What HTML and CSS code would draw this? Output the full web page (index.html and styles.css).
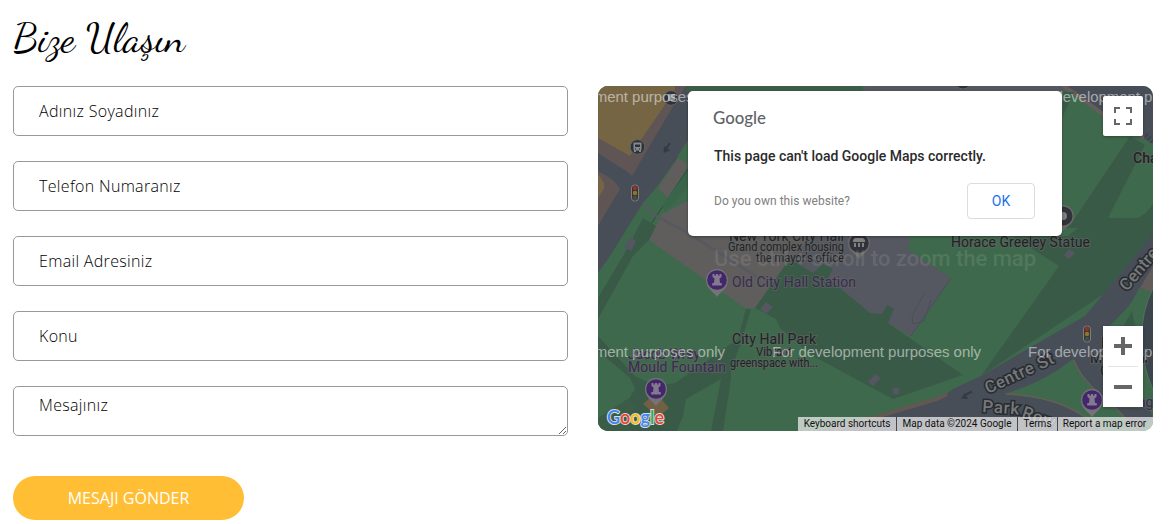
FILE: index.html
```html
<!DOCTYPE html>
<html lang="tr">
<head>
<meta charset="utf-8">
<title>Bize Ulaşın</title>
<link rel="stylesheet" href="styles.css">
</head>
<body>
<main class="contact">
  <h2 class="heading"><svg class="heading-art" width="190" height="56" viewBox="0 0 190 56"><text x="0" y="39.500" textLength="172" lengthAdjust="spacingAndGlyphs">Bize Ulaşın</text></svg></h2>
  <div class="columns">
    <form class="form">
      <input class="field" type="text" placeholder="Adınız Soyadınız">
      <input class="field" type="text" placeholder="Telefon Numaranız">
      <input class="field" type="email" placeholder="Email Adresiniz">
      <input class="field" type="text" placeholder="Konu">
      <textarea class="field message" placeholder="Mesajınız"></textarea>
      <button class="submit" type="button">MESAJI GÖNDER</button>
    </form>
    <section class="map">
      <svg class="canvas" width="555" height="345" viewBox="0 0 555 345">
        <defs>
          <g id="tower">
            <path d="M0 17C-3 12-11 9-11 0A11 11 0 0 1 11 0C11 9 3 12 0 17Z" fill="#77727a"/>
            <circle r="9.8" fill="#43276b"/>
            <path d="M-4.5-6h2v1.6h1.5V-6h2v1.6h1.5V-6H4.500v3L2.500-1.500 3 3H4.800v2.500H-4.800V3H-3l.5-4.500-2-1.500Z" fill="#85798f"/>
          </g>
          <g id="signal">
            <rect x="-3.5" y="-8" width="7" height="16" rx="3" fill="#3c3532" stroke="#827e77"/>
            <circle cy="-5" r="2.2" fill="#8c3434"/><circle r="2.2" fill="#8b762a"/><circle cy="5" r="2.2" fill="#3c504d"/>
          </g>
        </defs>
        <rect width="555" height="345" fill="#3f694c"/>
        <path d="M0 0H90L0 145Z" fill="#5e5554"/>
        <path d="M0 0H77V4L32 70 0 52Z" fill="#756545"/>
        <path d="M0 88 6 97V103L0 112Z" fill="#756545"/>
        <path d="M35 0 25 62M48 0 32 64M64 0 49 42M70 3 37 55" stroke="#786740" fill="none"/>
        <path d="M88 0H131L90 57 58 102 45 117 12 170 0 187V140L22 103Q17 93 0 85V67L20 80Q29 85 34 90L77 17Z" fill="#474e57"/>
        <path d="M90 57 60 102 70 112 90 80V115L64 128 51 154 147 222H157L190 177 230 150V90Z" fill="#605d5d"/>
        <path d="M90 54 79 71 90 78Z" fill="#3f694c"/>
        <path d="M90 83 53 138" stroke="#34483f" fill="none"/>
        <path d="M45 117C53 132 75 137 90 147L159 191" stroke="#56595f" stroke-width="2.5" fill="none"/>
        <path d="M64 119 67 126 80 113 90 100V85Z" fill="#39664a"/>
        <path d="M45 132 58 140 51 154 35 170 0 233V212L25 170Z" fill="#3a5a48"/>
        <path d="M32 151 38 155 33 165 26 161Z" fill="#555760"/>
        <path d="M215 150H312V157L309 163 353 192 313 250 290 237 272 227 190 175Z" fill="#565861"/>
        <path d="M188 178 197 176 215 187 225 178 235 183 230 192 272 227 284 228 289 219 296 223 290 237 365 289 295 313 215 270 182 242 178 233 157 222Z" fill="#3a5a48"/>
        <path d="M168 216 175 221 168 228 162 223ZM277 288 283 292 275 300 270 296Z" fill="#555760"/>
        <circle cx="298" cy="305" r="3.6" fill="#555760"/>
        <path d="M326 208 314 230 315 238 326 235 333 214M353 192 313 250" stroke="#4d4f59" fill="none"/>
        <path d="M88 0H265V6H88Z" fill="#3b5d48"/>
        <path d="M262 6 269 0H485V6Z" fill="#555760"/>
        <path d="M470 0 476 7 505 28 555 58V0Z" fill="#474e57"/>
        <path d="M465 0 476 7 505 28 546 52" stroke="#655d59" stroke-width="4" fill="none"/>
        <path d="M465 6H476L465 30ZM532 50 547 59 510 132H538Q546 131 555 118V175L383 290 461 180 414 150H470L480 142H465V135H475Z" fill="#3a5a48"/>
        <path d="M471 163 477 167 471 173 466 169Z" fill="#555760"/>
        <path d="M0 250 37 290 57 300 77 297 120 267 140 253 148 223H153L143 257 133 283V293L125 345H113L123 293 88 313 85 330 79 345H0V333L27 319 37 303 32 292 0 265Z" fill="#3a5a48"/>
        <path d="M0 345H32Q25 330 40 320L31 312 0 332Z" fill="#3b5d48"/>
        <path d="M45 318 58 307 71 322 60 331Z" fill="#716044"/>
        <path d="M555 148 537 170 487 230 445 254 383 290 355 303 339 315 220 345H540L555 330 505 247 555 195Z" fill="#474e57"/>
        <path d="M349 308 339 313 235 344" stroke="#625752" stroke-width="4" fill="none"/>
        <path d="M475 273Q482 294 511 315L540 345H502Q478 321 443 313L406 308Q445 297 475 273Z" fill="#3f694c"/>
        <path d="M408 308Q465 309 508 345M476 274Q484 296 511 315L540 345" stroke="#665c59" stroke-width="1.5" fill="none"/>
        <path d="M541 202Q530 227 506 246L534 271 555 317V206Z" fill="#3f694c"/>
        <path d="M542 202 555 180V206Z" fill="#625b5a"/>
        <path d="M534 225 517 254H540Z" fill="#3a5a48"/>
        <path d="M555 202Q532 250 555 304" fill="#3c444e" stroke="#507257"/>
        <path d="M72 57 67 64M366 309.500 374 305.500" stroke="#343b42" stroke-width="2" fill="none"/>
        <path d="M66 60 65.500 67 72 64.500ZM363 312.500 367 307 370 313Z" fill="#343b42"/>
        <path d="M548 49 555 56" stroke="#343b42" stroke-width="5" stroke-dasharray="1 3"/>
        <g fill="#29333d" stroke="#67625e"><circle cx="39.500" cy="61" r="7.3"/><circle cx="73" cy="12" r="7.3"/><circle cx="365" cy="-5" r="8"/></g>
        <g fill="#89898a"><rect x="35.500" y="56.500" width="8" height="8" rx="1"/><rect x="70" y="8" width="7" height="7" rx="1"/><path d="M36 64h2v2h-2zM41 64h2v2h-2z"/></g>
        <path d="M37 58.500h5v2.500h-5z" fill="#29333d"/><circle cx="37.500" cy="63" r=".7" fill="#29333d"/><circle cx="41.500" cy="63" r=".7" fill="#29333d"/>
        <use href="#signal" x="37" y="107"/><use href="#signal" x="489" y="248"/>
        <use href="#tower" x="119" y="194"/><use href="#tower" x="58" y="303"/><use href="#tower" x="494" y="314"/>
        <path d="M261 173C258 168 250 166 250 157A11 11 0 0 1 272 157C272 166 264 168 261 173ZM465 145C462 141 454 138 454 130A11 11 0 0 1 476 130C476 138 468 141 465 145Z" fill="#6a6968"/>
        <circle cx="261" cy="157" r="9.7" fill="#30343a"/><circle cx="465" cy="130" r="9.5" fill="#30343a"/><circle cx="465" cy="130" r="4" fill="#7c7c7c"/>
        <path d="M255 156v-2l2-2h8l2 2v2zM256 157h2v4h-2zM260 157h2v4h-2zM264 157h2v4h-2z" fill="#818181"/>
        <g class="label">
          <text x="131" y="155" textLength="115">New York City Hall</text>
          <g class="small"><text x="130" y="165" textLength="116" lengthAdjust="spacingAndGlyphs">Grand complex housing</text><text x="158" y="176" textLength="88" lengthAdjust="spacingAndGlyphs">the mayor's office</text></g>
          <text x="353" y="161" textLength="139">Horace Greeley Statue</text>
          <text x="134" y="258" textLength="84">City Hall Park</text>
          <g class="small"><text x="158" y="270" textLength="36" lengthAdjust="spacingAndGlyphs">Vibrant</text><text x="132" y="281" textLength="88" lengthAdjust="spacingAndGlyphs">greenspace with...</text></g>
          <g class="violet"><text x="134" y="201" textLength="124">Old City Hall Station</text><text x="30" y="273" textLength="72">Jacob Wrey</text><text x="30" y="286" textLength="98">Mould Fountain</text><text x="507" y="321">Printing</text></g>
          <text class="bold" x="535" y="77">Chambers St</text>
          <text x="503" y="262">M</text><text x="492" y="277" textLength="58">Memorial</text><text x="502" y="290">Grove</text>
        </g>
        <g class="street">
          <text transform="translate(390 308) rotate(-25)" textLength="74">Centre St</text>
          <text transform="translate(529 206) rotate(-50)">Centre St</text>
          <text transform="translate(384 326) rotate(4)" textLength="37">Park</text>
          <text transform="translate(423 331) rotate(19)" textLength="34">Row</text>
        </g>
        <text class="hint" x="116" y="180" textLength="322">Use ctrl + scroll to zoom the map</text>
        <g class="watermark">
          <text x="-82" y="15.500" textLength="209">For development purposes only</text><text x="174" y="15.500" textLength="209">For development purposes only</text><text x="430" y="15.500" textLength="209">For development purposes only</text>
          <text x="-82" y="271" textLength="209">For development purposes only</text><text x="174" y="271" textLength="209">For development purposes only</text><text x="430" y="271" textLength="209">For development purposes only</text>
        </g>
        <text class="brand" x="9" y="338" textLength="57" lengthAdjust="spacingAndGlyphs"><tspan fill="#4285f4">G</tspan><tspan fill="#ea4335">o</tspan><tspan fill="#fbbc05">o</tspan><tspan fill="#4285f4">g</tspan><tspan fill="#34a853">l</tspan><tspan fill="#ea4335">e</tspan></text>
      </svg>
      <div class="dialog">
        <svg class="dialog-logo" width="54" height="22" viewBox="0 0 54 22"><text x="0" y="16" textLength="53" lengthAdjust="spacingAndGlyphs">Google</text></svg>
        <p class="error">This page can't load Google Maps correctly.</p>
        <div class="dialog-row"><span class="owner">Do you own this website?</span><button class="ok" type="button">OK</button></div>
      </div>
      <button class="control fullscreen" type="button" aria-label="Tam ekran"><svg width="18" height="18" viewBox="0 0 18 18"><path d="M1 6V1H6M12 1H17V6M17 12V17H12M6 17H1V12" fill="none" stroke="#666" stroke-width="2"/></svg></button>
      <div class="control zoom">
        <svg width="18" height="40" viewBox="0 0 18 40"><path d="M9 11V29M0 20H18" stroke="#666" stroke-width="4"/></svg>
        <span class="divider"></span>
        <svg width="18" height="40" viewBox="0 0 18 40"><path d="M0 20H18" stroke="#666" stroke-width="4"/></svg>
      </div>
      <div class="legal"><span class="keys">Keyboard shortcuts</span><span class="data">Map data ©2024 Google</span><span class="terms">Terms</span><span class="report">Report a map error</span></div>
    </section>
  </div>
</main>
</body>
</html>
```
FILE: styles.css
```css
* { box-sizing: border-box; }
body { margin: 0; background: #fff; font-family: "Open Sans", sans-serif; overflow: hidden; }
.contact { width: 1174px; height: 524px; padding: 11px 21px 0 13px; }
.heading { margin: 0; height: 75px; }
.heading-art { display: block; overflow: visible; }
.heading-art text { font: 400 40px "Dancing Script", cursive; fill: #000; }
.columns { display: flex; gap: 30px; align-items: flex-start; }
.form { width: 555px; display: flex; flex-direction: column; align-items: flex-start; gap: 25px; }
.field { width: 555px; height: 50px; margin: 0; padding: 0 25px; border: 1px solid #999; border-radius: 5px; background: #fff; font: 300 16px/22px "Open Sans", sans-serif; letter-spacing: .33px; outline: 0; }
.field::placeholder { color: #000; opacity: 1; }
.message { display: block; padding-top: 7px; resize: vertical; overflow: hidden; }
.submit { width: 231px; height: 44px; margin-top: 15px; padding: 0; border: 0; border-radius: 22px; background: #ffbe33; color: #fff; font: 400 16px/44px "Open Sans", sans-serif; }
.map { position: relative; width: 555px; height: 345px; flex: none; overflow: hidden; border-radius: 10px; font-family: Roboto, sans-serif; }
.canvas { display: block; }
.label { font: 400 14px Roboto, sans-serif; fill: #202327; stroke: #626462; stroke-width: 2px; stroke-opacity: .65; paint-order: stroke; }
.small { font-size: 12px; }
.violet { fill: #392b51; }
.bold { font-weight: 500; }
.street { font: 500 17px Roboto, sans-serif; fill: #777878; stroke: #272c32; stroke-width: 3px; paint-order: stroke; }
.hint { font: 500 22px Roboto, sans-serif; fill: rgba(255,255,255,.11); }
.watermark { font: 400 15px "Liberation Sans", Arial, sans-serif; fill: rgba(255,255,255,.52); }
.brand { font: 600 20px Lato, sans-serif; stroke: #d8dedb; stroke-width: 2px; paint-order: stroke; }
.dialog { position: absolute; left: 90px; top: 5px; width: 374px; height: 145px; padding: 17px 27px 0 26px; border-radius: 5px; background: #fff; box-shadow: 0 1px 3px rgba(0,0,0,.35); }
.dialog-logo { display: block; margin-left: -1px; }
.dialog-logo text { font: 500 18px Lato, sans-serif; fill: #5f6368; }
.error { margin: 17px 0 0; color: #2a2a2a; font: 500 14px/18px Roboto, sans-serif; white-space: nowrap; }
.dialog-row { display: flex; align-items: center; justify-content: space-between; margin-top: 18px; }
.owner { color: #808080; font-size: 12px; letter-spacing: .04px; }
.ok { width: 68px; height: 36px; padding: 0; border: 1px solid #dadce0; border-radius: 4px; background: #fff; color: #1a73e8; font: 400 14px Roboto, sans-serif; }
.control { position: absolute; right: 10px; width: 40px; padding: 0; border: 0; border-radius: 2px; background: #fff; box-shadow: 0 1px 3px rgba(0,0,0,.3); display: flex; align-items: center; }
.fullscreen { top: 10px; height: 40px; justify-content: center; }
.zoom { top: 240px; height: 81px; flex-direction: column; border-radius: 0; }
.divider { width: 30px; height: 1px; background: #e2e2e2; }
.legal { position: absolute; right: 0; bottom: 0; display: flex; height: 14px; color: #111; font-size: 10px; line-height: 14px; text-align: center; white-space: nowrap; }
.legal span { background: rgba(245,245,245,.7); border-left: 1px solid #3f4850; }
.legal .keys { width: 98px; border-left: 0; }
.legal .data { width: 121px; }
.legal .terms { width: 40px; }
.legal .report { width: 96px; padding-right: 2px; }
```
